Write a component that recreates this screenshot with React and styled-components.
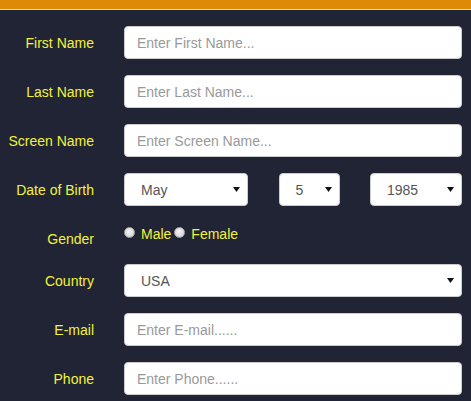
import React from "react";
import styled, { createGlobalStyle } from "styled-components";

const GlobalStyle = createGlobalStyle`
  html, body {
    margin: 0;
    padding: 0;
    background: #212435;
    font-family: "Liberation Sans", Arial, sans-serif;
    font-size: 14px;
  }
  * {
    box-sizing: border-box;
  }
`;

const Page = styled.div`
  width: 471px;
  min-height: 401px;
  background: #212435;
`;

const TopBar = styled.div`
  height: 10px;
  background: #df8a06;
  border-bottom: 1px solid #f1d9a8;
`;

const Form = styled.form`
  display: flex;
  flex-direction: column;
  gap: 16px;
  padding-top: 16px;
`;

const Row = styled.div`
  display: grid;
  grid-template-columns: 94px 338px;
  column-gap: 30px;
  align-items: start;
`;

const Label = styled.label`
  text-align: right;
  color: #f2f23c;
  font-size: 14px;
  line-height: 18px;
  padding-top: 8px;
  white-space: nowrap;
`;

const Input = styled.input`
  width: 100%;
  height: 33px;
  border: 1px solid #ccc;
  border-radius: 4px;
  background: #fff;
  padding: 0 12px;
  font-family: "Liberation Sans", Arial, sans-serif;
  font-size: 14px;
  color: #555;
  outline: none;

  &::placeholder {
    color: #999;
  }
`;

const SelectWrap = styled.div`
  position: relative;
  width: ${(p) => p.$w || "100%"};
`;

const Select = styled.select`
  appearance: none;
  -webkit-appearance: none;
  width: 100%;
  height: 33px;
  border: 1px solid #ccc;
  border-radius: 4px;
  background: #fff;
  padding: 0 20px 0 16px;
  font-family: "Liberation Sans", Arial, sans-serif;
  font-size: 14px;
  color: #555;
  outline: none;
`;

const Arrow = styled.svg`
  position: absolute;
  right: 8px;
  top: 14px;
  pointer-events: none;
`;

const DateGroup = styled.div`
  display: flex;
  justify-content: space-between;
`;

const RadioGroup = styled.div`
  display: flex;
  align-items: center;
  height: 22px;
  padding-top: 1px;
  color: #f2f23c;
  font-size: 14px;
`;

const RadioLabel = styled.label`
  display: flex;
  align-items: center;
  margin-right: 3px;
`;

const Radio = styled.span`
  width: 11px;
  height: 11px;
  border-radius: 50%;
  margin-right: 6px;
  margin-top: -3px;
  background: radial-gradient(circle at 45% 40%, #f4f4f4 0%, #dcdcdc 60%, #bdbdbd 100%);
  border: 1px solid #a9a9a9;
`;

function Caret() {
  return (
    <Arrow width="7" height="5" viewBox="0 0 7 5">
      <path d="M0 0 L7 0 L3.5 5 Z" fill="#111" />
    </Arrow>
  );
}

function DropDown({ w, value, options }) {
  return (
    <SelectWrap $w={w}>
      <Select defaultValue={value}>
        {options.map((o) => (
          <option key={o}>{o}</option>
        ))}
      </Select>
      <Caret />
    </SelectWrap>
  );
}

const months = ["Jan", "Feb", "Mar", "Apr", "May", "Jun", "Jul", "Aug", "Sep", "Oct", "Nov", "Dec"];
const days = Array.from({ length: 31 }, (_, i) => String(i + 1));
const years = Array.from({ length: 40 }, (_, i) => String(1970 + i));

export default function App() {
  return (
    <Page>
      <GlobalStyle />
      <TopBar />
      <Form>
        <Row>
          <Label>First Name</Label>
          <Input placeholder="Enter First Name..." />
        </Row>
        <Row>
          <Label>Last Name</Label>
          <Input placeholder="Enter Last Name..." />
        </Row>
        <Row>
          <Label>Screen Name</Label>
          <Input placeholder="Enter Screen Name..." />
        </Row>
        <Row>
          <Label>Date of Birth</Label>
          <DateGroup>
            <DropDown w="124px" value="May" options={months} />
            <DropDown w="61px" value="5" options={days} />
            <DropDown w="92px" value="1985" options={years} />
          </DateGroup>
        </Row>
        <Row>
          <Label>Gender</Label>
          <RadioGroup>
            <RadioLabel>
              <Radio />
              Male
            </RadioLabel>
            <RadioLabel>
              <Radio />
              Female
            </RadioLabel>
          </RadioGroup>
        </Row>
        <Row>
          <Label>Country</Label>
          <DropDown value="USA" options={["USA", "Canada", "UK"]} />
        </Row>
        <Row>
          <Label>E-mail</Label>
          <Input placeholder="Enter E-mail......" />
        </Row>
        <Row>
          <Label>Phone</Label>
          <Input placeholder="Enter Phone......" />
        </Row>
      </Form>
    </Page>
  );
}
